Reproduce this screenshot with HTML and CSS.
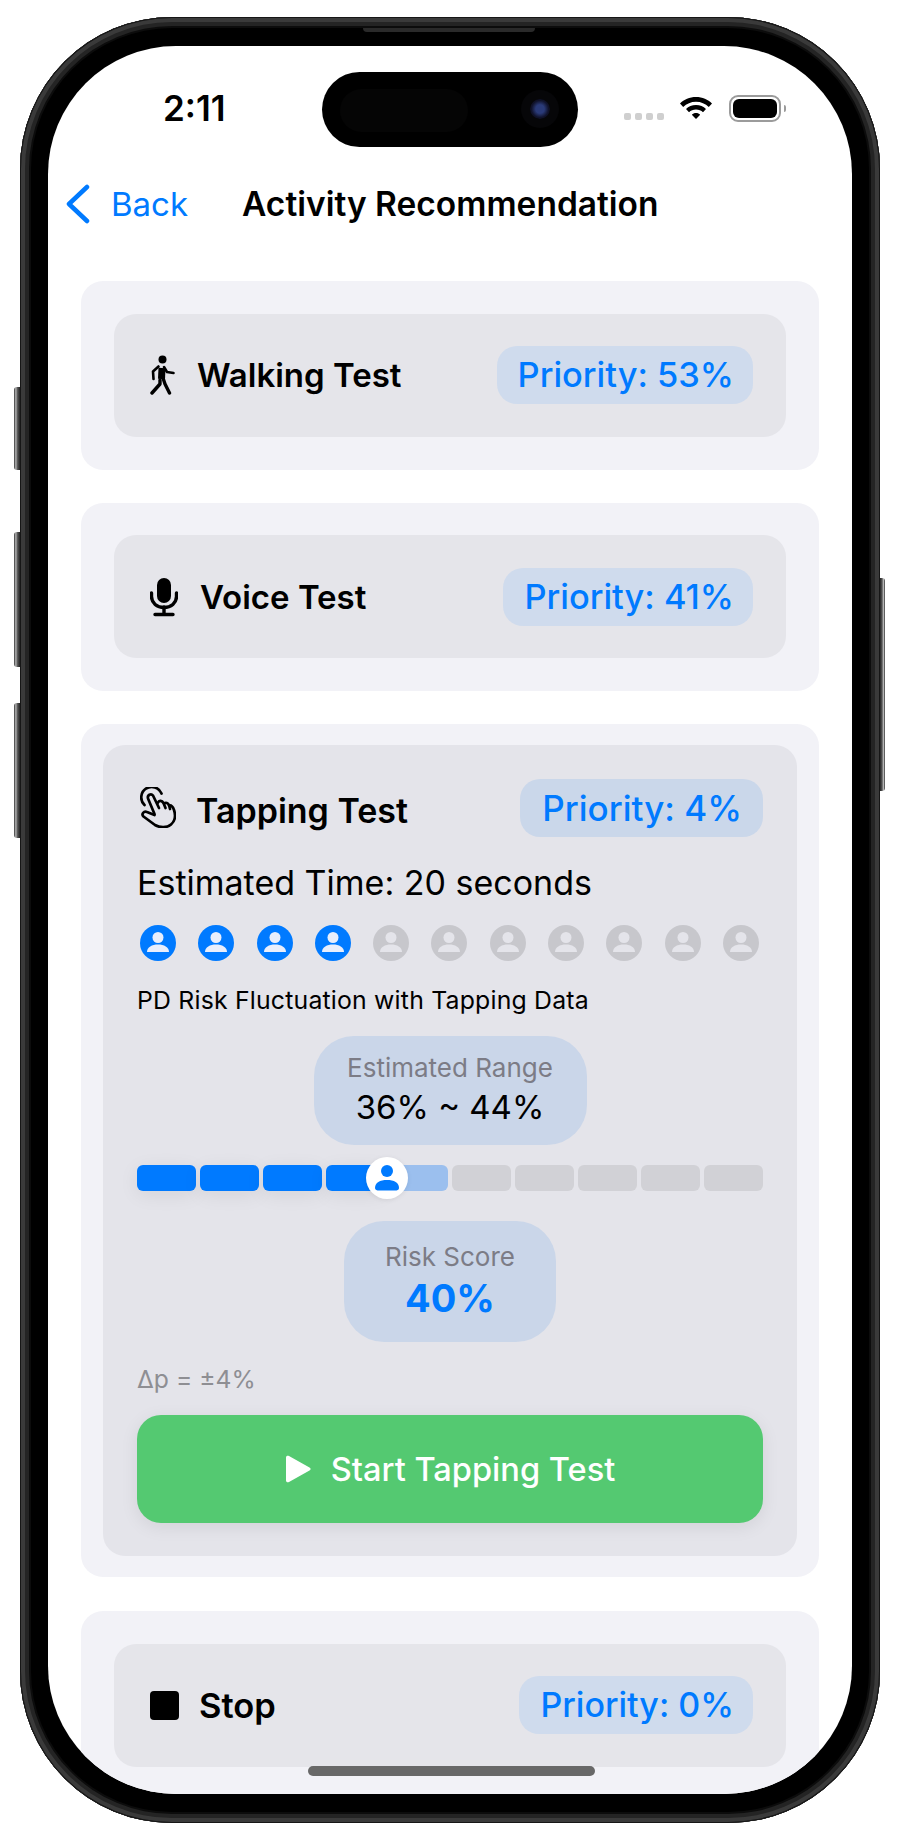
FILE: index.html
```html
<!DOCTYPE html>
<html lang="en">
<head>
<meta charset="utf-8">
<title>Activity Recommendation</title>
<link rel="stylesheet" href="styles.css">
</head>
<body>
<div class="phone">
  <span class="side side-l1"></span>
  <span class="side side-l2"></span>
  <span class="side side-l3"></span>
  <span class="side side-r"></span>
  <div class="bezel">
    <span class="speaker"></span>
    <main class="screen">
      <div class="island"><span class="lens"></span></div>
      <div class="status">
        <span class="clock">2:11</span>
        <div class="status-icons">
          <span class="signal"><i></i><i></i><i></i><i></i></span>
          <svg class="wifi" viewBox="0 0 34 26"><path d="M17 3C10.500 3 5 5.500 1 9.500L4.200 13C7.600 9.700 12 7.700 17 7.700S26.400 9.700 29.800 13L33 9.500C29 5.500 23.500 3 17 3Z"/><path d="M17 11C13 11 9.500 12.500 7 15L10 18.300C11.800 16.600 14.200 15.600 17 15.600S22.200 16.600 24 18.300L27 15C24.500 12.500 21 11 17 11Z"/><path d="M17 19C15.400 19 13.900 19.600 12.800 20.700L17 25L21.200 20.700C20.100 19.600 18.600 19 17 19Z"/></svg>
          <span class="battery"><span class="battery-fill"></span></span>
          <span class="battery-cap"></span>
        </div>
      </div>
      <nav class="navbar">
        <svg class="chevron" viewBox="0 0 26 40"><path d="M22 3L4 20L22 37" /></svg>
        <span class="back">Back</span>
        <span class="title">Activity Recommendation</span>
      </nav>
      <div class="list">
        <section class="card">
          <div class="inner row">
            <svg class="ico walk" viewBox="0 0 25 40"><circle cx="12.500" cy="4.500" r="4"/><path d="M12 13L11.500 24" class="line body"/><path d="M14 12L17 17L23.500 18" class="line arm"/><path d="M8.500 11.500L3 16.500L3.500 24" class="line arm"/><path d="M13 23L15 29L19.500 38" class="line leg"/><path d="M10 25V29L2 38" class="line leg"/></svg>
            <span class="name name-walk">Walking Test</span>
            <span class="priority">Priority: 53%</span>
          </div>
        </section>
        <section class="card">
          <div class="inner row">
            <svg class="ico mic" viewBox="0 0 28 40"><rect x="7" y="1" width="14" height="25" rx="7"/><path d="M1.500 16V19.500C1.500 26 7 30.500 14 30.500S26.500 26 26.500 19.500V16" class="line"/><path d="M14 30V37M5 37.500H23" class="line"/></svg>
            <span class="name name-voice">Voice Test</span>
            <span class="priority">Priority: 41%</span>
          </div>
        </section>
        <section class="card card-open">
          <div class="inner-open">
            <div class="row row-open">
              <svg class="ico tap" viewBox="0 0 36 41"><path d="M4.500 18A10.500 10.500 0 1 1 21.500 6.500" class="line thin"/><path d="M14.500 27L8 11.500C7 8 11 6 13 8.500L19 21" class="line thin"/><path d="M18 15.500C19 13 22 13.500 23.500 16L25.500 21" class="line thin"/><path d="M24 16.500C26 15 28 16 29 18L30 22" class="line thin"/><path d="M29 18.500C31.500 18 33 20 34 23C36 29 35 34 31 37.500C27 41 20 41 15 38L3.500 29.500C1 27 4 23.500 7 25L14.500 28" class="line thin"/></svg>
              <span class="name name-tap">Tapping Test</span>
              <span class="priority priority-lg">Priority: 4%</span>
            </div>
            <p class="estimate">Estimated Time: 20 seconds</p>
            <div class="people">
              <span class="person on"><svg viewBox="0 0 36 36"><circle cx="18" cy="12.500" r="5.500"/><path d="M7 27C7 22 12 19.500 18 19.500S29 22 29 27Z"/></svg></span>
              <span class="person on"><svg viewBox="0 0 36 36"><circle cx="18" cy="12.500" r="5.500"/><path d="M7 27C7 22 12 19.500 18 19.500S29 22 29 27Z"/></svg></span>
              <span class="person on"><svg viewBox="0 0 36 36"><circle cx="18" cy="12.500" r="5.500"/><path d="M7 27C7 22 12 19.500 18 19.500S29 22 29 27Z"/></svg></span>
              <span class="person on"><svg viewBox="0 0 36 36"><circle cx="18" cy="12.500" r="5.500"/><path d="M7 27C7 22 12 19.500 18 19.500S29 22 29 27Z"/></svg></span>
              <span class="person"><svg viewBox="0 0 36 36"><circle cx="18" cy="12.500" r="5.500"/><path d="M7 27C7 22 12 19.500 18 19.500S29 22 29 27Z"/></svg></span>
              <span class="person"><svg viewBox="0 0 36 36"><circle cx="18" cy="12.500" r="5.500"/><path d="M7 27C7 22 12 19.500 18 19.500S29 22 29 27Z"/></svg></span>
              <span class="person"><svg viewBox="0 0 36 36"><circle cx="18" cy="12.500" r="5.500"/><path d="M7 27C7 22 12 19.500 18 19.500S29 22 29 27Z"/></svg></span>
              <span class="person"><svg viewBox="0 0 36 36"><circle cx="18" cy="12.500" r="5.500"/><path d="M7 27C7 22 12 19.500 18 19.500S29 22 29 27Z"/></svg></span>
              <span class="person"><svg viewBox="0 0 36 36"><circle cx="18" cy="12.500" r="5.500"/><path d="M7 27C7 22 12 19.500 18 19.500S29 22 29 27Z"/></svg></span>
              <span class="person"><svg viewBox="0 0 36 36"><circle cx="18" cy="12.500" r="5.500"/><path d="M7 27C7 22 12 19.500 18 19.500S29 22 29 27Z"/></svg></span>
              <span class="person"><svg viewBox="0 0 36 36"><circle cx="18" cy="12.500" r="5.500"/><path d="M7 27C7 22 12 19.500 18 19.500S29 22 29 27Z"/></svg></span>
            </div>
            <p class="fluct">PD Risk Fluctuation with Tapping Data</p>
            <div class="bubble bubble-range">
              <span class="bubble-label">Estimated Range</span>
              <span class="bubble-value">36% ~ 44%</span>
            </div>
            <div class="bar">
              <i class="seg full"></i><i class="seg full"></i><i class="seg full"></i><i class="seg full"></i><i class="seg half"></i><i class="seg"></i><i class="seg"></i><i class="seg"></i><i class="seg"></i><i class="seg"></i>
              <span class="handle"><svg viewBox="0 0 42 42"><circle cx="21" cy="14" r="6"/><path d="M9 31C9 25.500 14 23 21 23S33 25.500 33 31C33 33 31 33.500 29 33.500H13C11 33.500 9 33 9 31Z"/></svg></span>
            </div>
            <div class="bubble bubble-risk">
              <span class="bubble-label">Risk Score</span>
              <span class="bubble-score">40%</span>
            </div>
            <p class="delta">Δp = ±4%</p>
            <button class="start"><svg class="play" viewBox="0 0 26 28"><path d="M1 2.500C1 1 2.500 0.300 4 1L24.500 12.500C26 13.300 26 14.700 24.500 15.500L4 27C2.500 27.700 1 27 1 25.500Z"/></svg>Start Tapping Test</button>
          </div>
        </section>
        <section class="card card-last">
          <div class="inner row">
            <span class="stop-ico"></span>
            <span class="name name-stop">Stop</span>
            <span class="priority priority-sm">Priority: 0%</span>
          </div>
        </section>
      </div>
      <span class="home"></span>
    </main>
  </div>
</div>
</body>
</html>
```

FILE: styles.css
```css
* { box-sizing: border-box; }
html, body { margin: 0; padding: 0; background: #fff; }
body { width: 900px; height: 1840px; overflow: hidden; font-family: Inter, "Liberation Sans", sans-serif; color: #000; padding: 17px 20px; }
p { margin: 0; }

.phone { position: relative; width: 860px; height: 1806px; }
.bezel {
  position: relative;
  width: 100%; height: 100%; padding: 29px 28px; border-radius: 152px;
  background: #000;
  box-shadow: inset 0 0 0 1px #161616, inset 0 0 0 5px #3a3a3a, inset 0 0 0 9px #242424, inset 0 0 0 11px #0c0c0c;
}
.speaker { position: absolute; left: 343px; top: 11px; width: 172px; height: 4px; background: #2a2a2a; border-radius: 0 0 4px 4px; }
.side { position: absolute; width: 6px; background: linear-gradient(90deg, #333, #b5b5b5 30%, #555 60%, #222); border-radius: 3px 0 0 3px; }
.side-l1 { left: -6px; top: 370px; height: 83px; }
.side-l2 { left: -6px; top: 515px; height: 135px; }
.side-l3 { left: -6px; top: 686px; height: 135px; }
.side-r { right: -5px; top: 561px; height: 213px; width: 5px; border-radius: 0 3px 3px 0; background: linear-gradient(270deg, #333, #b5b5b5 30%, #555 60%, #222); }

.screen { position: relative; width: 804px; height: 1748px; overflow: hidden; border-radius: 128px; background: #fff; }
.island { position: absolute; left: 274px; top: 26px; width: 256px; height: 75px; border-radius: 38px; background: #000; }
.island::before { content: ""; position: absolute; left: 18px; top: 17px; width: 128px; height: 43px; border-radius: 22px; background: #050505; }
.lens { position: absolute; right: 28px; top: 27px; width: 20px; height: 20px; border-radius: 50%; background: radial-gradient(circle, #2a3a78 0 30%, #10122a 60%, #08080c 100%); box-shadow: 0 0 0 9px #060608; }

.status { display: flex; align-items: center; height: 48px; margin-top: 38px; padding-left: 115px; position: relative; }
.clock { font-size: 35px; font-weight: 600; letter-spacing: 0; width: 80px; }
.status-icons { display: flex; align-items: center; margin-left: 381px; }
.signal { display: flex; gap: 4px; margin-right: 15px; margin-top: 17px; }
.signal i { display: block; width: 7px; height: 7px; border-radius: 2px; background: #cfcfcf; }
.wifi { width: 34px; height: 26px; fill: #000; margin-right: 16px; margin-top: -2px; }
.battery { width: 52px; height: 27px; border: 2px solid #9b9b9b; border-radius: 9px; padding: 2px; display: block; }
.battery-fill { display: block; width: 100%; height: 100%; background: #000; border-radius: 6px; }
.battery-cap { width: 2px; height: 7px; background: #9b9b9b; border-radius: 0 2px 2px 0; margin-left: 3px; }

.navbar { display: flex; align-items: center; height: 46px; margin-top: 49px; padding-left: 17px; }
.chevron { width: 26px; height: 40px; fill: none; stroke: #007aff; stroke-width: 4.500; stroke-linecap: round; stroke-linejoin: round; flex: none; }
.back { color: #007aff; font-size: 33px; margin-left: 20px; width: 131px; }
.title { font-size: 33.500px; font-weight: 600; white-space: nowrap; }

.list { display: flex; flex-direction: column; gap: 33px; padding: 0 33px; margin-top: 54px; }
.card { background: #f2f2f7; border-radius: 22px; padding: 32.750px 33px; }
.card-open { padding: 21px 22px; }
.card-last { margin-top: 1px; }
.inner { background: #e5e5ea; border-radius: 22px; padding: 32.500px 33px 32.500px 36px; }
.row { display: flex; align-items: center; }
.inner-open { background: #e4e4ea; border-radius: 22px; padding: 33px 34px 0; height: 811px; }
.row-open { height: 60px; }

.ico { flex: none; display: block; fill: #000; }
.line { fill: none; stroke: #000; stroke-width: 3.400; stroke-linecap: round; stroke-linejoin: round; }
.line.body { stroke-width: 7; stroke-linecap: butt; }
.line.arm { stroke-width: 2.600; }
.line.leg { stroke-width: 3.400; }
.line.thin { stroke-width: 2.700; }
.walk { width: 25px; height: 40px; }
.mic { width: 28px; height: 40px; }
.tap { width: 36px; height: 41px; margin-left: 3px; margin-top: -1px; }
.name { font-size: 33px; font-weight: 600; margin-left: 20px; flex: 1; white-space: nowrap; }
.name-walk { margin-left: 22px; }
.name-voice { margin-left: 22px; }
.name-tap { font-size: 34px; margin-left: 20px; margin-top: 5px; }
.name-stop { font-size: 34.500px; margin-left: 20px; }
.priority { background: #cfdbed; color: #007aff; font-size: 34.400px; font-weight: 500; height: 58px; line-height: 58px; padding: 0 19px 0 21px; border-radius: 20px; white-space: nowrap; }
.priority-lg { font-size: 35px; padding: 0 21px 0 22px; background: #cad7ea; }
.priority-sm { font-size: 34px; }
.stop-ico { width: 29px; height: 29px; border-radius: 4px; background: #000; flex: none; }

.estimate { font-size: 34px; margin-top: 23px; line-height: 44px; }
.people { display: flex; justify-content: space-between; margin-top: 20px; padding: 0 4px 0 3px; }
.person { width: 36px; height: 36px; border-radius: 50%; background: #c7c7cc; display: block; flex: none; }
.person svg { display: block; width: 36px; height: 36px; fill: #e4e4ea; }
.person.on { background: #007aff; }
.person.on svg { fill: #e8eefc; }
.fluct { font-size: 24.800px; line-height: 30px; margin-top: 24px; letter-spacing: 0.200px; white-space: nowrap; }

.bubble { display: flex; flex-direction: column; align-items: center; background: #cad6e9; margin: 0 auto; }
.bubble-range { width: 273px; height: 109px; border-radius: 40px; margin-top: 20.500px; padding-top: 17px; }
.bubble-risk { width: 212px; height: 121px; border-radius: 40px; margin-top: 30px; padding-top: 21px; }
.bubble-label { font-size: 26px; color: #7c7c86; line-height: 30px; }
.bubble-value { font-size: 33px; line-height: 42px; margin-top: 3px; }
.bubble-score { font-size: 38px; font-weight: 700; color: #007aff; line-height: 46px; margin-top: 3px; }

.bar { position: relative; display: flex; gap: 4.500px; height: 26px; margin-top: 20px; }
.seg { display: block; flex: 1; background: #d1d1d6; border-radius: 6px; }
.seg.full { background: #007aff; box-shadow: 0 4px 20px rgba(0,0,0,0.07); }
.seg.half { background: #9bbfee; }
.handle { position: absolute; left: 229px; top: -8px; width: 42px; height: 42px; border-radius: 50%; background: #fff; box-shadow: 0 1px 5px rgba(0,0,0,0.08); }
.handle svg { display: block; width: 42px; height: 42px; fill: #007aff; }

.delta { font-size: 24.700px; color: #8e8e93; line-height: 30px; margin-top: 22px; }
.start { display: flex; align-items: center; justify-content: center; width: 100%; height: 108px; margin-top: 21px; border: 0; border-radius: 24px; background: #54c971; color: #fff; font-family: inherit; font-size: 32.600px; font-weight: 500; box-shadow: 0 4px 18px rgba(0,0,0,0.08); }
.play { width: 26px; height: 28px; fill: #fff; margin-right: 20px; }

.home { position: absolute; left: 260px; bottom: 18px; width: 287px; height: 10px; border-radius: 5px; background: #686868; }
```
